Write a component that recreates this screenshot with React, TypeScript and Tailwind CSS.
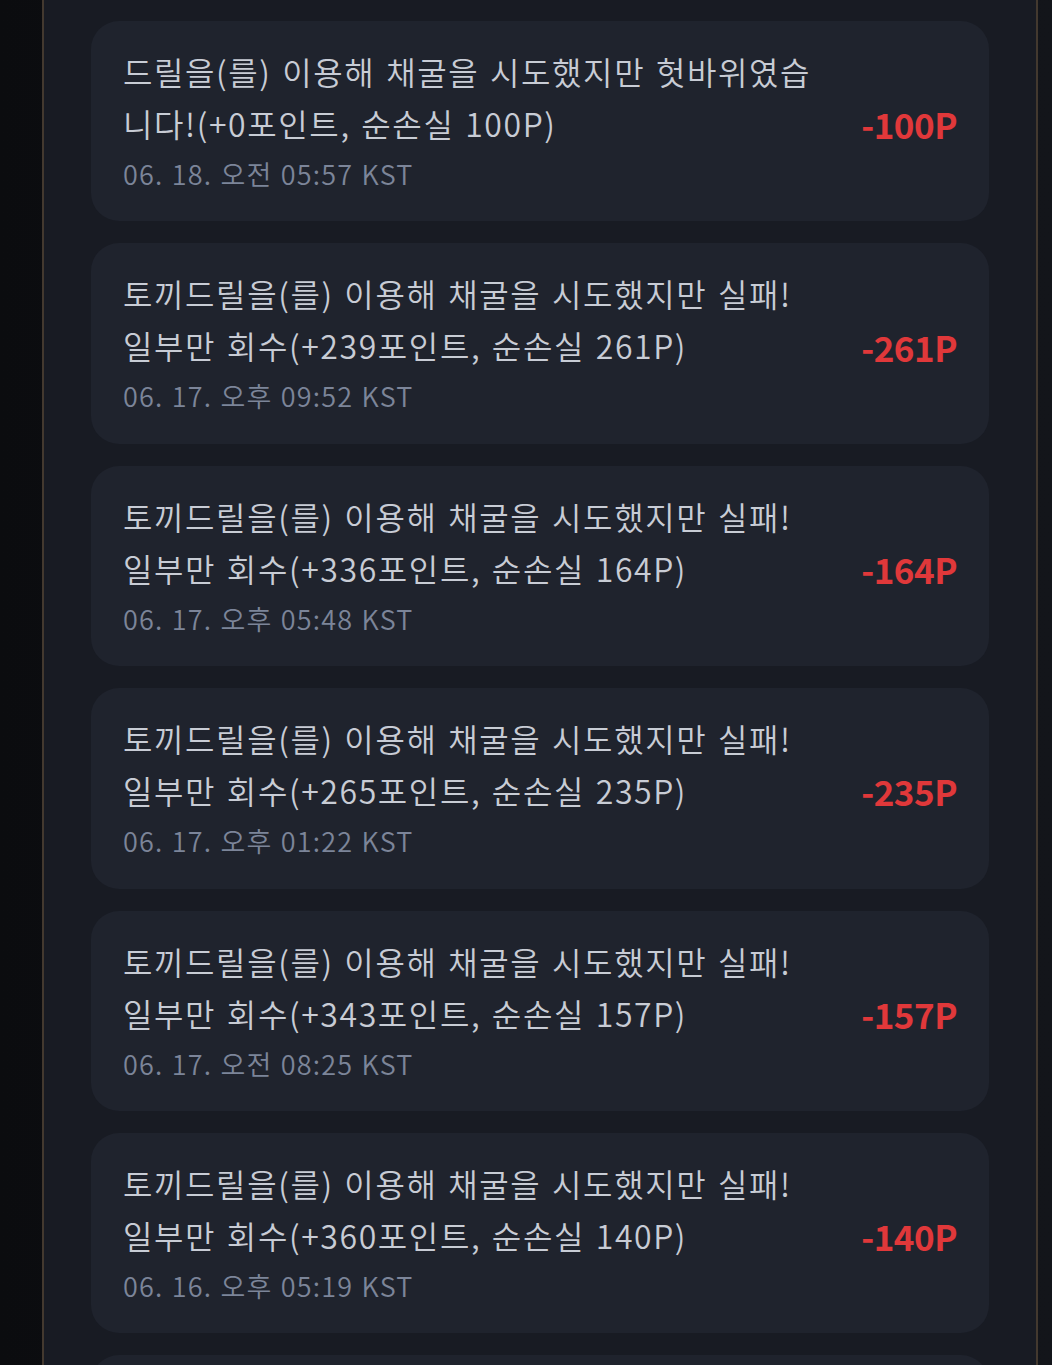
const logs = [
  { msg: "드릴을(를) 이용해 채굴을 시도했지만 헛바위였습니다!(+0포인트, 순손실 100P)", date: "06. 18. 오전 05:57 KST", amount: "-100P" },
  { msg: "토끼드릴을(를) 이용해 채굴을 시도했지만 실패! 일부만 회수(+239포인트, 순손실 261P)", date: "06. 17. 오후 09:52 KST", amount: "-261P" },
  { msg: "토끼드릴을(를) 이용해 채굴을 시도했지만 실패! 일부만 회수(+336포인트, 순손실 164P)", date: "06. 17. 오후 05:48 KST", amount: "-164P" },
  { msg: "토끼드릴을(를) 이용해 채굴을 시도했지만 실패! 일부만 회수(+265포인트, 순손실 235P)", date: "06. 17. 오후 01:22 KST", amount: "-235P" },
  { msg: "토끼드릴을(를) 이용해 채굴을 시도했지만 실패! 일부만 회수(+343포인트, 순손실 157P)", date: "06. 17. 오전 08:25 KST", amount: "-157P" },
  { msg: "토끼드릴을(를) 이용해 채굴을 시도했지만 실패! 일부만 회수(+360포인트, 순손실 140P)", date: "06. 16. 오후 05:19 KST", amount: "-140P" },
];

export default function App() {
  return (
    <div
      className="w-[1052px] h-[1365px] overflow-hidden bg-gradient-to-r from-[#0b0c0f] to-[#13151a] flex"
      style={{ fontFamily: '"Noto Sans CJK KR", "Noto Sans", sans-serif' }}
    >
      <div className="ml-[42px] w-[996px] shrink-0 border-x-2 border-[#43392f] bg-[#181b23] px-[47px] pt-[21px] flex flex-col gap-[22px]">
        {logs.map((l, i) => (
          <div key={i} className="bg-[#1f232d] rounded-[28px] px-[32px] pt-[24px] pb-[22.4px] flex items-center gap-[40px]">
            <div className="flex-1 min-w-0">
              <p className="text-[32px] leading-[52px] text-[#c8ccd5] font-[350] tracking-[1.6px] [word-spacing:2px]">{l.msg}</p>
              <p className="text-[27px] leading-[50px] text-[#7c8599] font-[350] tracking-[1.2px] [word-spacing:1px]">{l.date}</p>
            </div>
            <div className="text-[35px] font-bold text-[#e0383a] tracking-[-0.5px] shrink-0 mt-[5px]">{l.amount}</div>
          </div>
        ))}
        <div className="bg-[#1f232d] rounded-[28px] h-[200px] shrink-0" />
      </div>
    </div>
  );
}
